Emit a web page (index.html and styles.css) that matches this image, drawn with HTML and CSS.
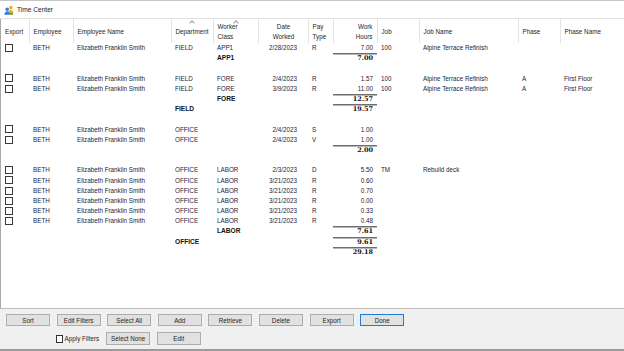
FILE: index.html
```html
<!DOCTYPE html>
<html lang="en">
<head>
  <meta charset="UTF-8">
  <title>Time Center</title>
  <link rel="stylesheet" href="styles.css">
</head>
<body>
  <div class="window">
    <div class="titlebar">
      <svg class="app-icon" width="10" height="10" viewBox="0 0 10 10">
        <circle cx="6.8" cy="2.6" r="1.8" fill="#f2b01e"/>
        <path d="M4.2 8.5 Q4.4 4.8 6.8 4.8 Q9.2 4.8 9.4 8.5 Z" fill="#f2b01e"/>
        <circle cx="3.2" cy="4.2" r="1.8" fill="#2f7fd6"/>
        <path d="M0.4 9.8 Q0.6 6.3 3.2 6.3 Q5.8 6.3 6 9.8 Z" fill="#2f7fd6"/>
        <path d="M6 8 Q7.5 7.4 9 8.6 L9 9.8 L5.4 9.8 Z" fill="#3fa34d"/>
      </svg>
      <span>Time Center</span>
    </div>

    <div class="grid">
      <table class="entries">
        <colgroup>
          <col style="width:29px"><col style="width:44px"><col style="width:98px">
          <col style="width:42px"><col style="width:45px"><col style="width:50px">
          <col style="width:25px"><col style="width:44px"><col style="width:42px">
          <col style="width:99px"><col style="width:42px"><col style="width:64px">
        </colgroup>
        <thead>
          <tr>
            <th class="first">Export</th>
            <th>Employee</th>
            <th>Employee Name</th>
            <th class="sorted">Department</th>
            <th class="sorted">Worker<br>Class</th>
            <th class="center">Date<br>Worked</th>
            <th>Pay<br>Type</th>
            <th class="num">Work<br>Hours</th>
            <th>Job</th>
            <th>Job Name</th>
            <th>Phase</th>
            <th>Phase Name</th>
          </tr>
        </thead>
        <tbody>
          <tr><td><span class="box"></span></td><td>BETH</td><td>Elizabeth Franklin Smith</td><td>FIELD</td><td>APP1</td><td class="date">2/28/2023</td><td>R</td><td class="num">7.00</td><td>100</td><td>Alpine Terrace Refinish</td><td></td><td></td></tr>
          <tr><td></td><td></td><td></td><td></td><td class="label">APP1</td><td></td><td></td><td class="num sum">7.00</td><td></td><td></td><td></td><td></td></tr>
          <tr class="blank"><td colspan="12"></td></tr>

          <tr><td><span class="box"></span></td><td>BETH</td><td>Elizabeth Franklin Smith</td><td>FIELD</td><td>FORE</td><td class="date">2/4/2023</td><td>R</td><td class="num">1.57</td><td>100</td><td>Alpine Terrace Refinish</td><td>A</td><td>First Floor</td></tr>
          <tr><td><span class="box"></span></td><td>BETH</td><td>Elizabeth Franklin Smith</td><td>FIELD</td><td>FORE</td><td class="date">3/9/2023</td><td>R</td><td class="num">11.00</td><td>100</td><td>Alpine Terrace Refinish</td><td>A</td><td>First Floor</td></tr>
          <tr><td></td><td></td><td></td><td></td><td class="label">FORE</td><td></td><td></td><td class="num sum">12.57</td><td></td><td></td><td></td><td></td></tr>
          <tr><td></td><td></td><td></td><td class="label">FIELD</td><td></td><td></td><td></td><td class="num sum">19.57</td><td></td><td></td><td></td><td></td></tr>
          <tr class="blank"><td colspan="12"></td></tr>

          <tr><td><span class="box"></span></td><td>BETH</td><td>Elizabeth Franklin Smith</td><td>OFFICE</td><td></td><td class="date">2/4/2023</td><td>S</td><td class="num">1.00</td><td></td><td></td><td></td><td></td></tr>
          <tr><td><span class="box"></span></td><td>BETH</td><td>Elizabeth Franklin Smith</td><td>OFFICE</td><td></td><td class="date">2/4/2023</td><td>V</td><td class="num">1.00</td><td></td><td></td><td></td><td></td></tr>
          <tr><td></td><td></td><td></td><td></td><td></td><td></td><td></td><td class="num sum">2.00</td><td></td><td></td><td></td><td></td></tr>
          <tr class="blank"><td colspan="12"></td></tr>

          <tr><td><span class="box"></span></td><td>BETH</td><td>Elizabeth Franklin Smith</td><td>OFFICE</td><td>LABOR</td><td class="date">2/3/2023</td><td>D</td><td class="num">5.50</td><td>TM</td><td>Rebuild deck</td><td></td><td></td></tr>
          <tr><td><span class="box"></span></td><td>BETH</td><td>Elizabeth Franklin Smith</td><td>OFFICE</td><td>LABOR</td><td class="date">3/21/2023</td><td>R</td><td class="num">0.60</td><td></td><td></td><td></td><td></td></tr>
          <tr><td><span class="box"></span></td><td>BETH</td><td>Elizabeth Franklin Smith</td><td>OFFICE</td><td>LABOR</td><td class="date">3/21/2023</td><td>R</td><td class="num">0.70</td><td></td><td></td><td></td><td></td></tr>
          <tr><td><span class="box"></span></td><td>BETH</td><td>Elizabeth Franklin Smith</td><td>OFFICE</td><td>LABOR</td><td class="date">3/21/2023</td><td>R</td><td class="num">0.00</td><td></td><td></td><td></td><td></td></tr>
          <tr><td><span class="box"></span></td><td>BETH</td><td>Elizabeth Franklin Smith</td><td>OFFICE</td><td>LABOR</td><td class="date">3/21/2023</td><td>R</td><td class="num">0.33</td><td></td><td></td><td></td><td></td></tr>
          <tr><td><span class="box"></span></td><td>BETH</td><td>Elizabeth Franklin Smith</td><td>OFFICE</td><td>LABOR</td><td class="date">3/21/2023</td><td>R</td><td class="num">0.48</td><td></td><td></td><td></td><td></td></tr>
          <tr><td></td><td></td><td></td><td></td><td class="label">LABOR</td><td></td><td></td><td class="num sum">7.61</td><td></td><td></td><td></td><td></td></tr>
          <tr><td></td><td></td><td></td><td class="label">OFFICE</td><td></td><td></td><td></td><td class="num sum">9.61</td><td></td><td></td><td></td><td></td></tr>
          <tr><td></td><td></td><td></td><td></td><td></td><td></td><td></td><td class="num sum">29.18</td><td></td><td></td><td></td><td></td></tr>
        </tbody>
      </table>
    </div>

    <div class="footer">
      <div class="button-row">
        <button>Sort</button>
        <button>Edit Filters</button>
        <button>Select All</button>
        <button>Add</button>
        <button>Retrieve</button>
        <button>Delete</button>
        <button>Export</button>
        <button class="default">Done</button>
      </div>
      <div class="button-row">
        <span class="slot"></span>
        <label class="check"><span class="box"></span>Apply Filters</label>
        <button>Select None</button>
        <button>Edit</button>
      </div>
    </div>
    <div class="edge"></div>
  </div>
</body>
</html>
```

FILE: styles.css
```css
* {
  box-sizing: border-box;
}

body {
  margin: 0;
  font-family: "Liberation Sans", Arial, sans-serif;
  font-size: 6.3px;
  color: #1e1e1e;
  background: #ffffff;
}

.window {
  display: flex;
  flex-direction: column;
  width: 624px;
  height: 351px;
  overflow: hidden;
}

.titlebar {
  height: 19px;
  display: flex;
  align-items: center;
  gap: 3px;
  padding-left: 4px;
  border-top: 1px solid #c4c4c4;
  border-bottom: 1px solid #e2e2e2;
  font-size: 6.6px;
  color: #222;
}

.app-icon {
  display: block;
}

.grid {
  flex: 1;
  background: #fff;
  border-left: 1px solid #a9a9a9;
  border-bottom: 1px solid #bdbdbd;
  overflow: hidden;
}

.entries {
  table-layout: fixed;
  border-collapse: collapse;
  width: 624px;
  margin-left: -1px;
}

.entries th {
  height: 24px;
  padding: 1px 3px 0 4px;
  font-weight: normal;
  text-align: left;
  vertical-align: middle;
  line-height: 9.5px;
  border-left: 1px solid #e4e4e4;
  color: #1e1e1e;
  position: relative;
}

.entries th.first {
  border-left: none;
  padding-left: 5px;
}

.entries th.center {
  text-align: center;
}

.entries th.sorted::before {
  content: "";
  position: absolute;
  top: 1.5px;
  left: 50%;
  width: 3px;
  height: 3px;
  margin-left: -2px;
  border-left: 1px solid #9a9a9a;
  border-top: 1px solid #9a9a9a;
  transform: rotate(45deg);
}

.entries td {
  height: 10.2px;
  padding: 0 3px 0 4px;
  line-height: 10px;
  white-space: nowrap;
  overflow: hidden;
  color: #24243a;
}

.entries .num {
  text-align: right;
  padding-right: 4px;
}

.entries td.date {
  text-align: right;
  padding-right: 11px;
}

.entries td.label {
  font-weight: bold;
  font-size: 6.6px;
  color: #111;
}

.entries td.sum {
  font-family: "DejaVu Serif", "Liberation Serif", serif;
  font-weight: bold;
  font-size: 6.5px;
  color: #111;
  box-shadow: inset 0 1.6px 0 #6e6e6e;
}

.box {
  display: inline-block;
  width: 8px;
  height: 8px;
  border: 1px solid #3a3a3a;
  background: #fff;
  vertical-align: middle;
}

.entries td .box {
  margin-left: 1px;
  margin-top: -1px;
}

.footer {
  height: 40px;
  background: #f0f0f0;
  padding: 5px 0 0 6px;
  display: flex;
  flex-direction: column;
  gap: 6px;
}

.button-row {
  display: flex;
  gap: 6.6px;
  align-items: center;
}

.button-row button,
.slot,
.check {
  width: 44px;
  flex: none;
}

.button-row button {
  height: 12px;
  padding: 0;
  font-family: inherit;
  font-size: 6.3px;
  color: #1e1e1e;
  background: #e1e1e1;
  border: 1px solid #adadad;
}

.button-row:last-child button {
  height: 13px;
}

.button-row button.default {
  border: 1px solid #1a7fd4;
}

.check {
  display: flex;
  align-items: center;
  gap: 2px;
  white-space: nowrap;
  margin-left: -1px;
}

.check .box {
  width: 7px;
  height: 8px;
  border-color: #333;
}

.edge {
  height: 2px;
  background: #9b9b9b;
}
```
